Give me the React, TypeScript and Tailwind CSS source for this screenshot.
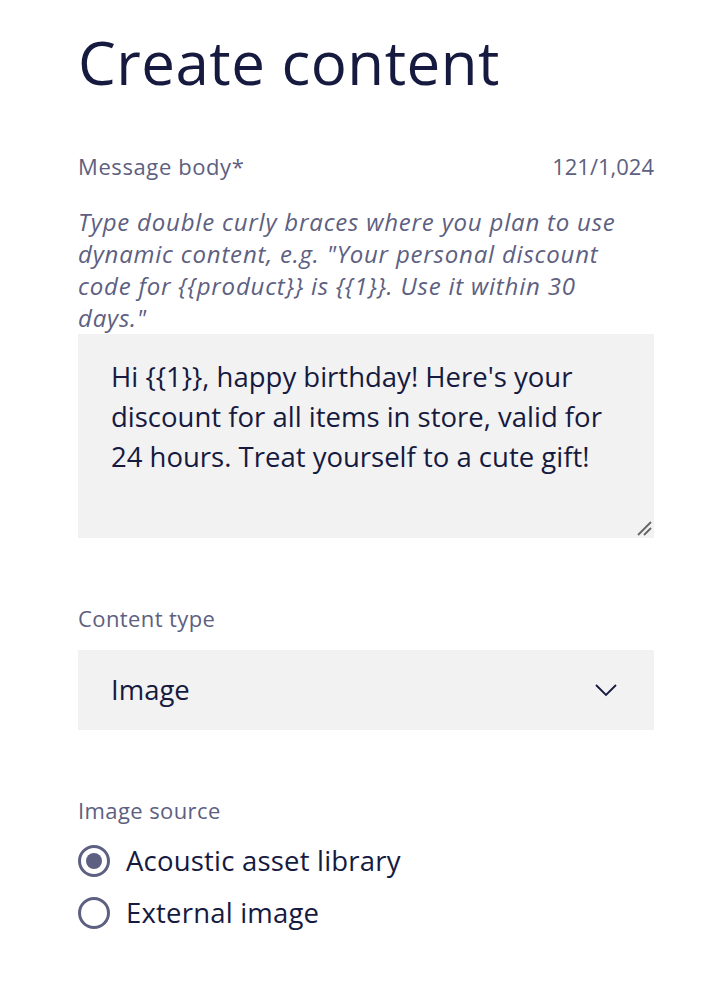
import React from "react";

export default function App() {
  const font = { fontFamily: "'Open Sans', 'Noto Sans', sans-serif" };
  return (
    <div className="min-h-[988px] w-[704px] bg-white text-[#161a3f]" style={font}>
      <div className="flex w-[576px] flex-col pl-[78px] pt-[24px]" style={{ boxSizing: "content-box" }}>
        <h1 className="text-[60px] font-normal leading-[76px] tracking-[0.5px] text-[#161a3f]">Create content</h1>

        <div className="mt-[52px] flex items-center justify-between text-[22px] leading-[28px] text-[#5d6080]">
          <span className="tracking-[0.6px]">Message body*</span>
          <span>121/1,024</span>
        </div>

        <p className="mt-[26px] pr-[16px] text-[24px] italic leading-[32px] tracking-[0.8px] text-[#5d6080]">
          Type double curly braces where you plan to use dynamic content, e.g. "Your personal discount code for {"{{product}}"} is {"{{1}}"}. Use it within 30 days."
        </p>

        <div className="relative h-[204px] bg-[#f2f2f2] px-[33px] pt-[23px] text-[27.5px] leading-[40px] text-[#161a3f]">
          Hi {"{{1}}"}, happy birthday! Here's your discount for all items in store, valid for 24 hours. Treat yourself to a cute gift!
          <svg className="absolute bottom-[2px] right-[2px]" width="15" height="15" viewBox="0 0 15 15">
            <path d="M14 1 L1 14 M14 7 L7 14" stroke="#666666" strokeWidth="1.8" fill="none" />
          </svg>
        </div>

        <div className="mt-[66px] text-[22px] leading-[28px] tracking-[0.4px] text-[#5d6080]">Content type</div>

        <div className="mt-[18px] flex h-[80px] items-center justify-between bg-[#f2f2f2] pl-[33px] pr-[37px]">
          <span className="text-[27.5px] text-[#161a3f]">Image</span>
          <svg width="22" height="14" viewBox="0 0 22 14">
            <path d="M1 2 L11 12 L21 2" stroke="#161a3f" strokeWidth="1.8" fill="none" />
          </svg>
        </div>

        <div className="mt-[66px] text-[22px] leading-[28px] tracking-[0.4px] text-[#5d6080]">Image source</div>

        <div className="mt-[20px] flex flex-col gap-[18px]">
          <label className="flex items-center gap-[16px]">
            <span className="flex h-[32px] w-[32px] items-center justify-center rounded-full border-[3px] border-[#5d6080]">
              <span className="h-[16px] w-[16px] rounded-full bg-[#5d6080]" />
            </span>
            <span className="text-[27.5px] leading-[34px] tracking-[0.2px] text-[#161a3f]">Acoustic asset library</span>
          </label>
          <label className="flex items-center gap-[16px]">
            <span className="h-[32px] w-[32px] rounded-full border-[3px] border-[#5d6080]" />
            <span className="text-[27.5px] leading-[34px] tracking-[0.2px] text-[#161a3f]">External image</span>
          </label>
        </div>
      </div>
    </div>
  );
}
